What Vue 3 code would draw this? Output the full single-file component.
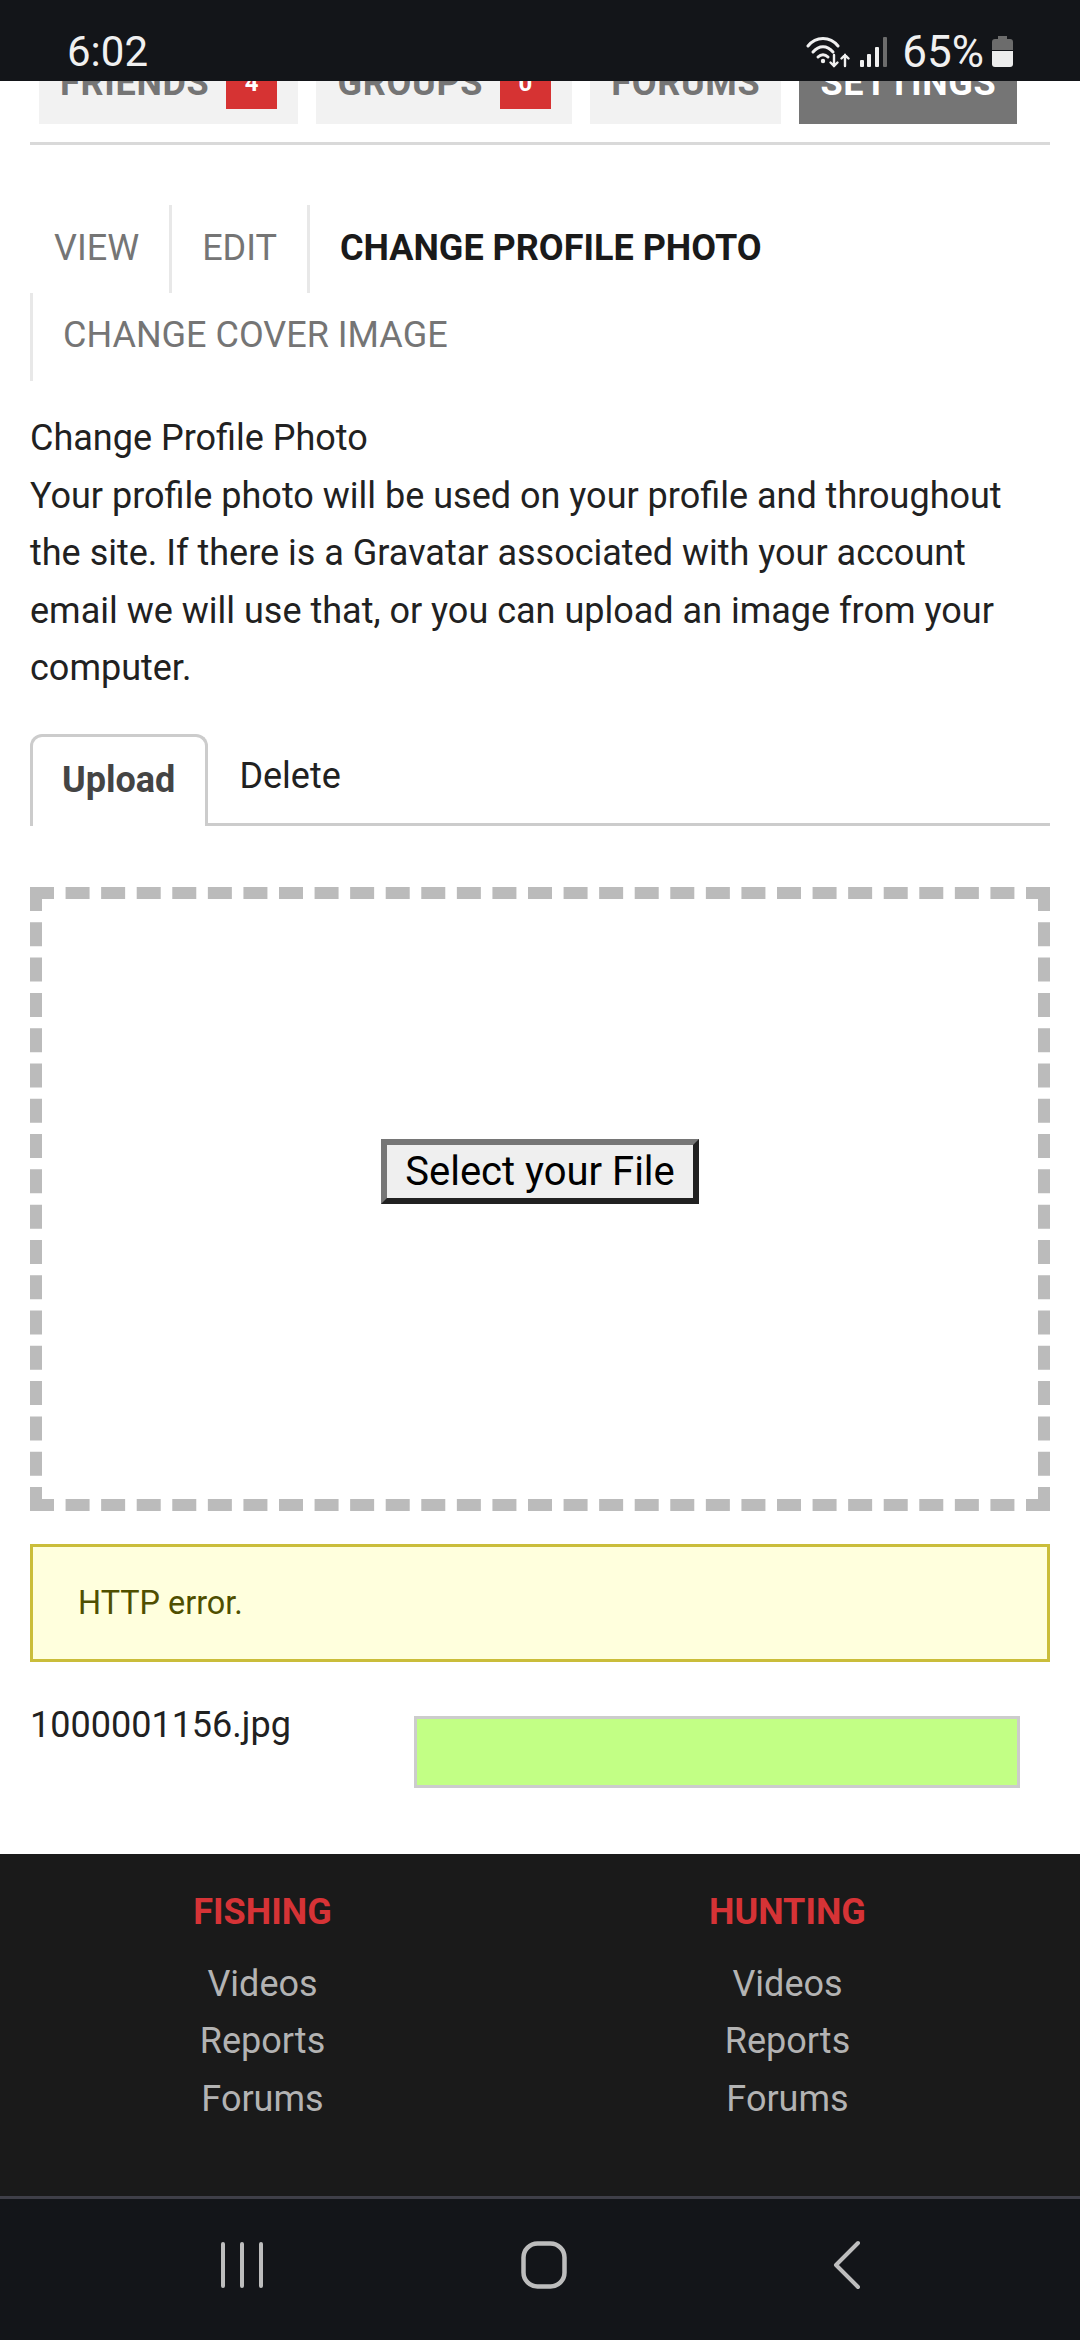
<template>
  <div class="screen">
    <!-- status bar -->
    <div class="status">
      <span class="time">6:02</span>
      <div class="status-right">
        <svg class="ic-wifi" width="44" height="32" viewBox="0 0 44 32" fill="none" stroke="#f0f0f0" stroke-linecap="round">
          <path d="M2 10 C10 0 24 0 32 10" stroke-width="3" />
          <path d="M7 16 C13 9 21 9 27 16" stroke-width="3" />
          <path d="M12 21 C15 18 19 18 22 21" stroke-width="3" />
          <circle cx="17" cy="25" r="2.2" fill="#f0f0f0" stroke="none" />
          <path d="M28 19 V30 M24.5 26.5 L28 30 L31.5 26.5" stroke-width="2.4" />
          <path d="M39 30 V19 M35.5 22.5 L39 19 L42.5 22.5" stroke-width="2.4" />
        </svg>
        <svg class="ic-signal" width="27" height="30" viewBox="0 0 27 30">
          <rect x="0" y="23" width="4" height="7" rx="1" fill="#f0f0f0" />
          <rect x="7" y="17" width="4" height="13" rx="1" fill="#f0f0f0" />
          <rect x="15" y="10" width="4" height="20" rx="1" fill="#f0f0f0" />
          <rect x="23" y="0" width="4" height="30" rx="1" fill="#6c6c6c" />
        </svg>
        <span class="pct">65%</span>
        <svg class="ic-batt" width="21" height="32" viewBox="0 0 21 32">
          <path d="M6 0 H15 V3 H18 Q21 3 21 6 V14 H0 V6 Q0 3 3 3 H6 Z" fill="#6c6c6c" />
          <path d="M0 15 H21 V28 Q21 31 18 31 H3 Q0 31 0 28 Z" fill="#ececec" />
        </svg>
      </div>
    </div>

    <div class="main">
      <div class="content">
        <!-- top tabs, scrolled partly under status bar -->
        <div class="top-tabs">
          <div v-for="t in topTabs" :key="t.name" class="top-tab" :class="{ on: t.on }">
            {{ t.name }}
            <span v-if="t.badge !== undefined" class="badge">{{ t.badge }}</span>
          </div>
        </div>
        <div class="rule"></div>

        <ul class="subnav">
          <li class="first">VIEW</li>
          <li>EDIT</li>
          <li class="cur">CHANGE PROFILE PHOTO</li>
          <li>CHANGE COVER IMAGE</li>
        </ul>

        <p class="intro">
          Change Profile Photo<br />
          Your profile photo will be used on your profile and throughout the site. If there is a Gravatar associated with your account email we will use that, or you can upload an image from your computer.
        </p>

        <div class="tabs">
          <div class="tab active">Upload</div>
          <div class="tab">Delete</div>
        </div>

        <div class="dropzone">
          <button class="select-btn">Select your File</button>
        </div>

        <div class="error">HTTP error.</div>

        <div class="file-row">
          <span class="file-name">1000001156.jpg</span>
          <div class="progress"></div>
        </div>
      </div>

      <div class="footer">
        <div v-for="col in columns" :key="col" class="col">
          <h4>{{ col }}</h4>
          <a v-for="l in links" :key="l">{{ l }}</a>
        </div>
      </div>
    </div>

    <!-- android nav -->
    <div class="navbar">
      <svg width="46" height="48" viewBox="0 0 46 48" stroke="#bdbdbd" stroke-width="4" stroke-linecap="round">
        <path d="M4 3 V45 M23 3 V45 M42 3 V45" />
      </svg>
      <svg class="home" width="46" height="48" viewBox="0 0 46 48" fill="none" stroke="#bdbdbd" stroke-width="4.5">
        <rect x="2.5" y="2.5" width="41" height="43" rx="14" />
      </svg>
      <svg class="back" width="30" height="50" viewBox="0 0 30 50" fill="none" stroke="#bdbdbd" stroke-width="4" stroke-linecap="round" stroke-linejoin="round">
        <path d="M26 3 L4 25 L26 47" />
      </svg>
    </div>
  </div>
</template>

<script setup>
const topTabs = [
  { name: 'FRIENDS', badge: 4 },
  { name: 'GROUPS', badge: 0 },
  { name: 'FORUMS' },
  { name: 'SETTINGS', on: true },
]
const columns = ['FISHING', 'HUNTING']
const links = ['Videos', 'Reports', 'Forums']
</script>

<style>
body {
  background: #fff;
}
</style>

<style scoped>
.screen {
  width: 1080px;
  height: 2340px;
  display: flex;
  flex-direction: column;
  overflow: hidden;
  font-family: Roboto, "Liberation Sans", sans-serif;
  font-size: 36px;
  color: #212121;
}

.status {
  height: 81px;
  flex: none;
  background: #131519;
  color: #f0f0f0;
  display: flex;
  justify-content: space-between;
  align-items: flex-end;
  padding: 0 67px 6px 67px;
  box-sizing: border-box;
}
.time {
  font-size: 42px;
  line-height: 46px;
}
.status-right {
  display: flex;
  align-items: center;
  height: 46px;
}
.ic-signal {
  margin-left: 10px;
}
.pct {
  font-size: 44px;
  margin-left: 15px;
  margin-right: 8px;
}

.main {
  flex: 1;
  min-height: 0;
  display: flex;
  flex-direction: column;
  overflow: hidden;
}
.content {
  flex: 1;
  padding: 0 30px;
}

.top-tabs {
  display: flex;
  gap: 18px;
  margin-top: -39px;
  padding-left: 9px;
}
.top-tab {
  height: 82px;
  padding: 0 21px;
  background: #f2f2f2;
  color: #757575;
  font-weight: 700;
  letter-spacing: 0.7px;
  display: flex;
  align-items: center;
  gap: 17px;
}
.top-tab.on {
  background: #757575;
  color: #fff;
}
.badge {
  width: 51px;
  height: 51px;
  background: #d63333;
  color: #fff;
  font-size: 24px;
  display: flex;
  align-items: center;
  justify-content: center;
}
.rule {
  height: 3px;
  background: #d9d9d9;
  margin-top: 18px;
}

.subnav {
  list-style: none;
  margin: 60px 0 0;
  padding: 0;
  display: flex;
  flex-wrap: wrap;
}
.subnav li {
  height: 88px;
  line-height: 86px;
  padding: 0 30px;
  border-left: 3px solid #e8e8e8;
  color: #757575;
}
.subnav li.first {
  border-left: 0;
  padding-left: 24px;
}
.subnav li.cur {
  color: #1a1a1a;
  font-weight: 700;
}
.subnav li:last-child {
  line-height: 85px;
}

.intro {
  margin: 29px 0 0;
  line-height: 57.6px;
}

.tabs {
  display: flex;
  margin-top: 36px;
  border-bottom: 3px solid #ccc;
  height: 89px;
}
.tab {
  padding: 0 32px 0 31px;
  height: 89px;
  line-height: 84px;
  box-sizing: border-box;
}
.tab.active {
  border: 3px solid #ccc;
  border-bottom: 0;
  border-radius: 12px 12px 0 0;
  background: #fff;
  color: #444;
  font-weight: 700;
  height: 92px;
  line-height: 86px;
  padding: 0 30px 0 29px;
}

.dropzone {
  margin-top: 61px;
  height: 624px;
  box-sizing: border-box;
  border: 12px dashed #bbb;
  padding-top: 240px;
  display: flex;
  align-items: flex-start;
  justify-content: center;
}
.select-btn {
  width: 318px;
  height: 65px;
  box-sizing: border-box;
  border: 6px solid;
  border-color: #767676 #212121 #212121 #767676;
  background: #efefef;
  color: #000;
  font-family: inherit;
  font-size: 40px;
  padding: 0;
}

.error {
  margin-top: 33px;
  height: 118px;
  box-sizing: border-box;
  border: 3px solid #cabd3a;
  background: #ffffdd;
  color: #4f4f00;
  font-size: 32.4px;
  padding-left: 45px;
  display: flex;
  align-items: center;
}

.file-row {
  display: flex;
  margin-top: 54px;
}
.file-name {
  width: 384px;
  margin-top: -16px;
  line-height: 50px;
}
.progress {
  width: 606px;
  height: 72px;
  box-sizing: border-box;
  border: 3px solid #ccc;
  background: #c2ff85;
}

.footer {
  flex: none;
  height: 345px;
  box-sizing: border-box;
  background: #1a1a1a;
  padding: 30px 30px 0 0;
  display: grid;
  grid-template-columns: 1fr 1fr;
  border-bottom: 3px solid #3f3f48;
}
.col {
  text-align: center;
}
.col h4 {
  margin: 0 0 14px;
  font-size: 36px;
  line-height: 57.6px;
  color: #d63336;
  font-weight: 700;
}
.col a {
  display: block;
  line-height: 57.6px;
  color: #b3b3b3;
}

.navbar {
  flex: none;
  height: 141px;
  background: #131519;
  display: flex;
  align-items: center;
  padding: 0 0 10px 219px;
  box-sizing: border-box;
}
.home {
  margin-left: 256px;
}
.back {
  margin-left: 265px;
}
</style>
